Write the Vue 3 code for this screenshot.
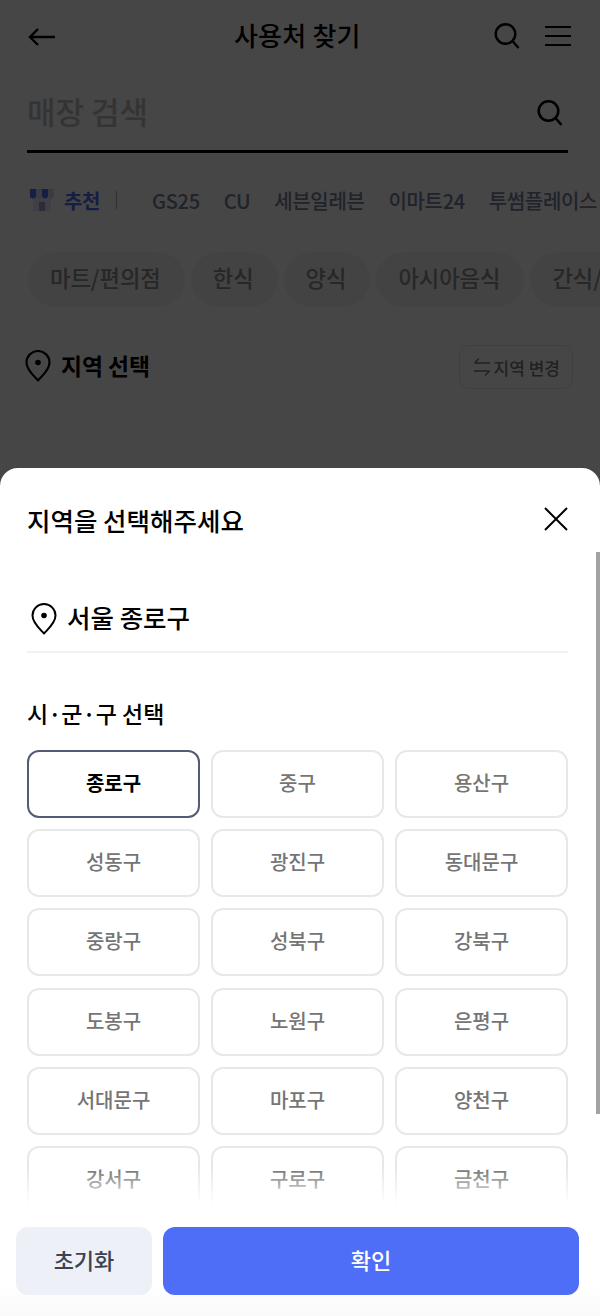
<template>
  <div class="screen">
    <div class="page">
      <header class="top-bar">
        <button class="icon-btn back">
          <svg width="28" height="20" viewBox="0 0 28 20" fill="none" stroke="#000" stroke-width="2.4">
            <path d="M27 10H2M10 2l-8 8 8 8" />
          </svg>
        </button>
        <h1 class="page-title">사용처 찾기</h1>
        <div class="top-actions">
          <svg width="28" height="28" viewBox="0 0 28 28" fill="none" stroke="#000" stroke-width="2.4">
            <circle cx="12.5" cy="12" r="9.8" />
            <path d="M19.5 19l6 7" />
          </svg>
          <svg width="26" height="24" viewBox="0 0 26 24" fill="none" stroke="#000" stroke-width="2">
            <path d="M0 3h26M0 12h26M0 21h26" />
          </svg>
        </div>
      </header>

      <div class="search-bar">
        <span class="placeholder">매장 검색</span>
        <svg class="search-icon" width="28" height="28" viewBox="0 0 28 28" fill="none" stroke="#000" stroke-width="2.6">
          <circle cx="12.5" cy="12" r="9.8" />
          <path d="M19.5 19l6 7" />
        </svg>
      </div>

      <div class="brand-row">
        <svg class="shop" width="24" height="22" viewBox="0 0 24 22">
          <path d="M3 7h18v15H3z" fill="#e3e7f6" />
          <path d="M9 13h6v9H9z" fill="#9aa5c8" />
          <path d="M6 0h6v6.500a3 3 0 0 1-6 0z" fill="#d6dbef" />
          <path d="M18 0h6v6.500a3 3 0 0 1-6 0z" fill="#d6dbef" />
          <path d="M0 0h6v6.500a3 3 0 0 1-6 0z" fill="#4f6ef7" />
          <path d="M12 0h6v6.500a3 3 0 0 1-6 0z" fill="#4f6ef7" />
        </svg>
        <span class="brand recommend">추천</span>
        <i class="brand-sep"></i>
        <span v-for="b in brands" :key="b" class="brand">{{ b }}</span>
      </div>

      <div class="pill-row">
        <span v-for="c in categories" :key="c" class="pill">{{ c }}</span>
      </div>

      <div class="region-row">
        <div class="region-label">
          <svg class="pin" width="26" height="32" viewBox="0 0 26 32" fill="none" stroke="#000" stroke-width="2.2">
            <path d="M13 30.500C9 26 1.500 20 1.500 12.500a11.500 11.500 0 0 1 23 0C24.500 20 17 26 13 30.500z" stroke-linejoin="round" />
            <circle cx="13" cy="12.500" r="2.800" fill="#000" stroke="none" />
          </svg>
          <span>지역 선택</span>
        </div>
        <button class="region-btn">
          <svg width="18" height="20" viewBox="0 0 18 20" fill="none" stroke="#7a7a7a" stroke-width="1.500">
            <path d="M17 6H1.500M6 1.500L1.500 6M1 14h15.500M12 18.500l4.500-4.500" />
          </svg>
          지역 변경
        </button>
      </div>
    </div>

    <div class="dim"></div>

    <section class="sheet">
      <div class="sheet-head">
        <h2 class="sheet-title">지역을 선택해주세요</h2>
        <svg width="24" height="24" viewBox="0 0 24 24" fill="none" stroke="#000" stroke-width="2">
          <path d="M1 1l22 22M23 1L1 23" />
        </svg>
      </div>

      <div class="sheet-body">
        <div class="current">
          <svg class="pin" width="26" height="32" viewBox="0 0 26 32" fill="none" stroke="#000" stroke-width="2">
            <path d="M13 30.500C9 26 1.500 20 1.500 12.500a11.500 11.500 0 0 1 23 0C24.500 20 17 26 13 30.500z" stroke-linejoin="round" />
            <circle cx="13" cy="12.500" r="2.800" fill="#000" stroke="none" />
          </svg>
          <span>서울 종로구</span>
        </div>

        <h3 class="section-title">시·군·구 선택</h3>

        <div class="district-grid">
          <button
            v-for="d in districts"
            :key="d"
            :class="['district', { active: d === selected }]"
          >{{ d }}</button>
        </div>
      </div>

      <div class="fade"></div>
      <div class="scroll-thumb"></div>

      <footer class="sheet-foot">
        <button class="btn reset">초기화</button>
        <button class="btn confirm">확인</button>
      </footer>
    </section>
  </div>
</template>

<script setup>
const brands = ['GS25', 'CU', '세븐일레븐', '이마트24', '투썸플레이스']
const categories = ['마트/편의점', '한식', '양식', '아시아음식', '간식/음료']
const selected = '종로구'
const districts = [
  '종로구', '중구', '용산구',
  '성동구', '광진구', '동대문구',
  '중랑구', '성북구', '강북구',
  '도봉구', '노원구', '은평구',
  '서대문구', '마포구', '양천구',
  '강서구', '구로구', '금천구',
]
</script>

<style>
html, body {
  margin: 0;
  background: #fff;
}
</style>

<style scoped>
.screen {
  position: relative;
  width: 600px;
  height: 1316px;
  overflow: hidden;
  font-family: "Noto Sans CJK KR", "Noto Sans", sans-serif;
  color: #000;
  background: #fff;
}

button {
  font-family: inherit;
  background: none;
  border: none;
  padding: 0;
}

h1, h2, h3 {
  margin: 0;
}

.page {
  height: 468px;
  overflow: hidden;
}

.top-bar {
  display: flex;
  align-items: center;
  justify-content: space-between;
  height: 72px;
  padding: 0 29px 0 28px;
  position: relative;
}

.icon-btn {
  display: flex;
  margin-top: 2px;
}

.page-title {
  font-size: 26px;
  line-height: 70px;
  font-weight: 500;
  letter-spacing: 0.2px;
  position: absolute;
  left: 234px;
  top: 0;
}

.top-actions {
  display: flex;
  align-items: center;
  gap: 24px;
}

.search-bar {
  display: flex;
  align-items: center;
  justify-content: space-between;
  height: 78px;
  margin: 0 32px 0 27px;
  padding-right: 4px;
  border-bottom: 3px solid #000;
}

.placeholder {
  font-size: 31px;
  font-weight: 500;
  color: #bdbdbd;
  margin-bottom: 2px;
}

.search-icon {
  margin-top: 3px;
}

.brand-row {
  display: flex;
  align-items: center;
  height: 30px;
  margin-top: 32px;
  padding-left: 30px;
  white-space: nowrap;
  overflow: hidden;
}

.shop {
  flex: none;
  margin-right: 10px;
}

.brand {
  font-size: 20px;
  font-weight: 500;
  letter-spacing: -0.35px;
  color: #747f9e;
  margin-right: 24px;
}

.recommend {
  color: #4f6ef7;
  font-weight: 700;
  margin-right: 16px;
}

.brand-sep {
  flex: none;
  width: 1px;
  height: 18px;
  background: #a8adbd;
  margin-right: 35px;
}

.pill-row {
  display: flex;
  gap: 6px;
  margin-top: 37px;
  padding-left: 28px;
  white-space: nowrap;
}

.pill {
  flex: none;
  height: 55px;
  line-height: 50px;
  padding: 0 24px 0 22px;
  border-radius: 28px;
  background: #f4f4f4;
  font-size: 22.200px;
  font-weight: 500;
  color: #8e8e8e;
}

.region-row {
  display: flex;
  align-items: center;
  justify-content: space-between;
  margin-top: 38px;
  padding: 0 27px 0 25px;
}

.region-label {
  display: flex;
  align-items: center;
  gap: 10px;
  margin-bottom: 4px;
  font-size: 22.800px;
  font-weight: 700;
}

.region-label .pin {
  margin-top: 1px;
}

.region-btn {
  display: flex;
  align-items: center;
  gap: 3px;
  height: 44px;
  padding: 0 12px 0 13px;
  border: 1.5px solid #e4e4e4;
  border-radius: 10px;
  font-size: 17px;
  font-weight: 500;
  color: #7a7a7a;
}

.dim {
  position: absolute;
  inset: 0;
  background: rgba(0, 0, 0, 0.725);
}

.sheet {
  position: absolute;
  left: 0;
  right: 0;
  top: 468px;
  bottom: 0;
  display: flex;
  flex-direction: column;
  border-radius: 18px 18px 0 0;
  background: #fff;
  overflow: hidden;
}

.sheet-head {
  flex: none;
  display: flex;
  align-items: center;
  justify-content: space-between;
  height: 102px;
  padding: 0 32px 0 27px;
}

.sheet-title {
  font-size: 25.500px;
  font-weight: 500;
}

.sheet-body {
  flex: 1;
  min-height: 0;
  overflow: hidden;
  padding: 0 32px 0 27px;
}

.current {
  display: flex;
  align-items: center;
  gap: 10px;
  box-sizing: border-box;
  height: 83px;
  padding: 12px 0 0 4px;
  border-bottom: 2px solid #f2f2f2;
  font-size: 25.500px;
  font-weight: 500;
}

.current .pin {
  margin-top: 5px;
}

.section-title {
  margin-top: 42px;
  height: 36px;
  line-height: 36px;
  font-size: 23px;
  font-weight: 500;
}

.district-grid {
  display: grid;
  grid-template-columns: repeat(3, 1fr);
  gap: 11.200px 11px;
  margin-top: 19px;
}

.district {
  height: 68px;
  padding-bottom: 3px;
  border: 2px solid #e8e8e8;
  border-radius: 12px;
  background: #fff;
  font-size: 20px;
  font-weight: 500;
  color: #757575;
}

.district.active {
  border-color: #555b75;
  color: #000;
  font-weight: 700;
}

.fade {
  position: absolute;
  left: 0;
  right: 0;
  bottom: 111px;
  height: 36px;
  background: linear-gradient(rgba(255, 255, 255, 0), #fff);
}

.scroll-thumb {
  position: absolute;
  right: 0;
  top: 84px;
  width: 4px;
  height: 562px;
  background: #a3a3a3;
}

.sheet-foot {
  flex: none;
  display: flex;
  gap: 11px;
  height: 111px;
  box-sizing: border-box;
  padding: 22px 21px 21px 16px;
  background: linear-gradient(#fff 70%, #fafafa);
}

.btn {
  height: 68px;
  padding-bottom: 5px;
  border-radius: 12px;
  font-size: 22px;
  font-weight: 500;
}

.reset {
  flex: none;
  width: 136px;
  background: #edf0f7;
  color: #3c4250;
}

.confirm {
  flex: 1;
  background: #4f6ef7;
  color: #fff;
}
</style>
